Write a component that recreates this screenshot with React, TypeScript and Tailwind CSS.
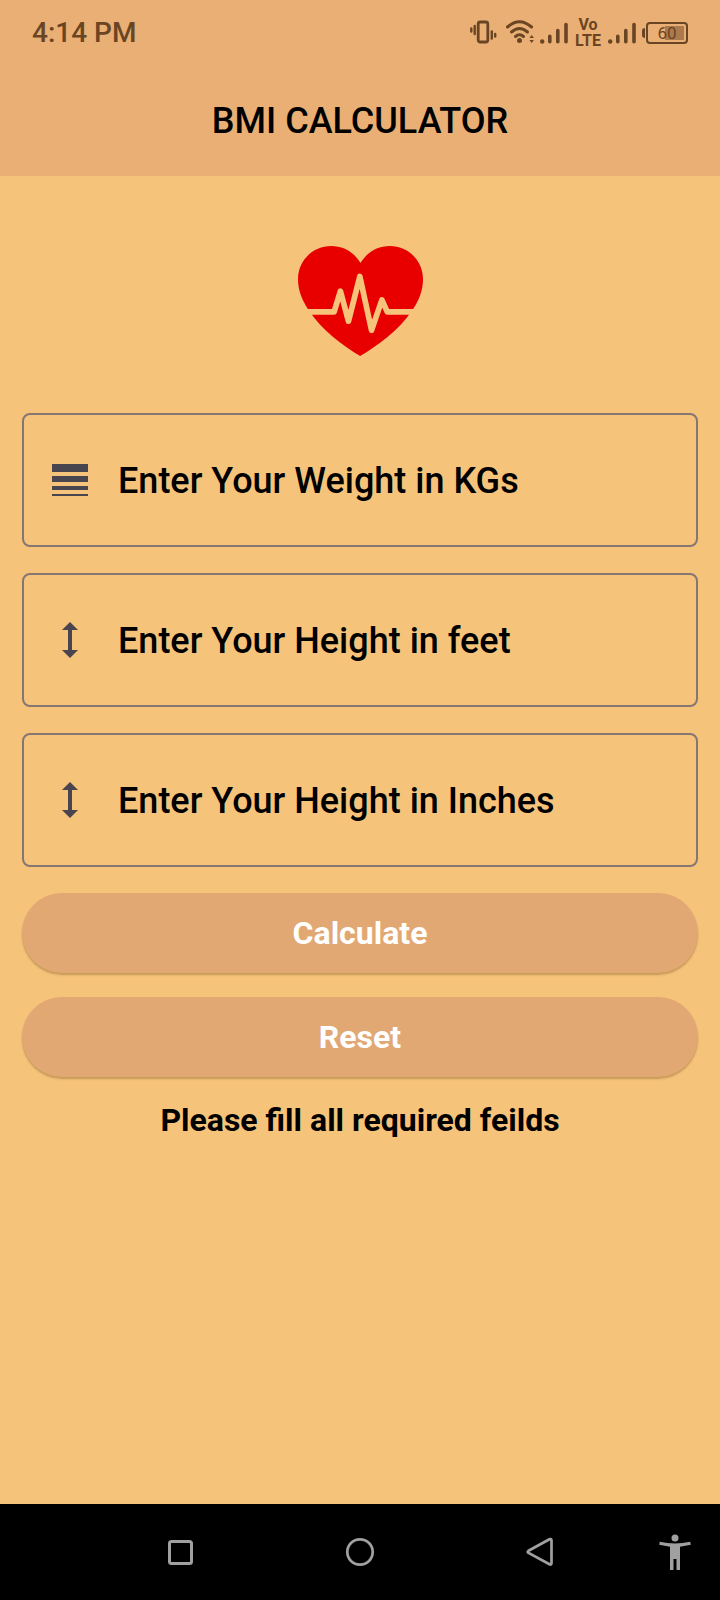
import { useState } from "react";
import type { FormEvent, ReactNode } from "react";

function VibrateIcon() {
  return (
    <svg className="h-[26px] w-[30px]" viewBox="0 0 30 26" fill="none" stroke="currentColor" strokeWidth="2.8" strokeLinecap="round" aria-hidden="true">
      <rect x="8.200" y="2" width="9.600" height="20" rx="2" />
      <path d="M4.700 6v8M1.300 8.500v3M21.800 11.500v7M25.200 14v2.500" strokeWidth="2.400" />
    </svg>
  );
}

function WifiIcon() {
  return (
    <svg className="h-[26px] w-7" viewBox="0 0 28 26" fill="none" stroke="currentColor" strokeWidth="3" strokeLinecap="round" aria-hidden="true">
      <path d="M1.500 7Q13.500 -3.500 25.500 7" />
      <path d="M5.500 12Q13.500 5 21.500 12" />
      <path d="M9.500 16.500Q13.500 13 17.500 16.500" />
      <circle cx="13.500" cy="20.500" r="2.500" fill="currentColor" stroke="none" />
      <path d="M23.500 18l2.200-3 2.200 3zM23.500 20l2.200 3 2.200-3z" fill="currentColor" stroke="none" />
    </svg>
  );
}

function SignalIcon() {
  return (
    <svg className="h-[26px] w-7" viewBox="0 0 28 26" fill="none" stroke="currentColor" strokeWidth="3.6" strokeLinecap="round" aria-hidden="true">
      <circle cx="2.200" cy="21.500" r="2.200" fill="currentColor" stroke="none" />
      <path d="M9.800 21.700v-5.500M17.800 21.700V10.500M26 21.700V4.500" />
    </svg>
  );
}

function Battery({ level }: { level: number }) {
  return (
    <div className="flex items-center gap-px" aria-label={`Battery ${level}%`}>
      <span className="h-[10px] w-[3px] rounded-l-sm bg-current" />
      <span className="relative flex h-[22px] w-[42px] items-center justify-center rounded-[4px] border-2 border-current p-[2px]">
        <span className="ml-auto h-full w-[19px] bg-[#ac7b4d]" />
        <span className="absolute inset-0 text-center text-[17px] leading-[18px]">{level}</span>
      </span>
    </div>
  );
}

function StatusBar() {
  return (
    <div className="flex h-[66px] items-center justify-between px-8 text-[#6a4523]">
      <span className="text-[28px] leading-8 font-medium">4:14 PM</span>
      <div className="flex items-center gap-[6px]">
        <VibrateIcon />
        <WifiIcon />
        <SignalIcon />
        <span className="flex w-7 flex-col items-center text-[16px] leading-4 font-bold">
          <span>Vo</span>
          <span>LTE</span>
        </span>
        <SignalIcon />
        <Battery level={60} />
      </div>
    </div>
  );
}

function HeartPulse() {
  return (
    <svg className="h-[110px] w-[125px]" viewBox="53 47 374 329" aria-hidden="true">
      <path
        fill="#e80000"
        d="M239 376C187 345 125 300 83 236C64 207 53 179 53 146C53 90 98 47 152 47C190 47 221 66 240 98C259 66 290 47 328 47C382 47 427 90 427 146C427 179 416 207 397 236C355 300 291 345 239 376Z"
      />
      <path
        fill="none"
        stroke="#f6c37a"
        strokeWidth="17"
        strokeLinecap="round"
        strokeLinejoin="round"
        d="M60 244H161L180 182L204 272L238 138L273 299L304 208L320 244H420"
      />
    </svg>
  );
}

function LineWeightIcon() {
  return (
    <svg className="size-12 shrink-0" viewBox="0 0 24 24" fill="currentColor" aria-hidden="true">
      <path d="M3 17h18v-2H3v2zm0 3h18v-1H3v1zm0-7h18v-3H3v3zm0-9v4h18V4H3z" />
    </svg>
  );
}

function HeightIcon() {
  return (
    <svg className="size-12 shrink-0" viewBox="0 0 24 24" fill="currentColor" aria-hidden="true">
      <path d="M13 6.990h3L12 3 8 6.990h3v10.020H8L12 21l4-3.990h-3z" />
    </svg>
  );
}

type FieldProps = {
  label: string;
  icon: ReactNode;
  value: string;
  onChange: (value: string) => void;
};

function Field({ label, icon, value, onChange }: FieldProps) {
  return (
    <label className="flex h-[134px] items-center gap-6 rounded-lg border-2 border-[#857573] px-[22px] text-[#49454f]">
      {icon}
      <input
        type="text"
        inputMode="decimal"
        aria-label={label}
        placeholder={label}
        value={value}
        onChange={(event) => onChange(event.target.value)}
        className="min-w-0 flex-1 bg-transparent pt-0.5 text-[36px] leading-[48px] font-medium text-black outline-none placeholder:text-black placeholder:opacity-100"
      />
    </label>
  );
}

const buttonClass =
  "h-20 w-full rounded-full bg-[#e2a873] text-[32px] leading-10 font-bold text-white shadow-[0_2px_2px_rgba(110,80,20,0.35)]";

function NavigationBar() {
  return (
    <nav className="grid h-24 grid-cols-8 items-center bg-black text-[#a0a0a0]">
      <button type="button" aria-label="Recent apps" className="col-span-2 col-start-2 flex justify-center">
        <svg className="size-8" viewBox="0 0 32 32" fill="none" stroke="currentColor" strokeWidth="3">
          <rect x="5.500" y="5.500" width="22" height="22" rx="2" />
        </svg>
      </button>
      <button type="button" aria-label="Home" className="col-span-2 flex justify-center">
        <svg className="size-8" viewBox="0 0 32 32" fill="none" stroke="currentColor" strokeWidth="2.700">
          <circle cx="16" cy="16" r="12.700" />
        </svg>
      </button>
      <button type="button" aria-label="Back" className="col-span-2 flex justify-center">
        <svg className="size-8" viewBox="0 0 32 32" fill="none" stroke="currentColor" strokeWidth="2.700" strokeLinejoin="round">
          <path d="M4.500 14.800L25.500 3.200Q27.500 2.400 27.500 4.500V27Q27.500 29.300 25.500 28.300L4.500 16.900Q3 15.900 4.500 14.800Z" />
        </svg>
      </button>
      <button type="button" aria-label="Accessibility" className="flex justify-center">
        <svg className="h-9 w-8" viewBox="0 0 32 36" fill="currentColor">
          <circle cx="16" cy="4" r="3.500" />
          <path d="M.8 7.800Q16 11.300 31.200 7.800L31.800 10.800L21 12.800V36H17.500V25H14.500V36H11V12.800L.2 10.800Z" />
        </svg>
      </button>
    </nav>
  );
}

export default function App() {
  const [weight, setWeight] = useState("");
  const [feet, setFeet] = useState("");
  const [inches, setInches] = useState("");
  const [message, setMessage] = useState("Please fill all required feilds");

  const calculate = (event: FormEvent) => {
    event.preventDefault();
    const meters = (Number(feet) * 12 + Number(inches)) * 0.0254;
    if (!weight || !feet || !inches || !(meters > 0)) {
      setMessage("Please fill all required feilds");
      return;
    }
    setMessage(`Your BMI is ${(Number(weight) / (meters * meters)).toFixed(2)}`);
  };

  const reset = () => {
    setWeight("");
    setFeet("");
    setInches("");
    setMessage("");
  };

  return (
    <div className="flex min-h-screen flex-col bg-[#f6c37a] font-['Roboto',sans-serif]">
      <header className="bg-[#e9af74]">
        <StatusBar />
        <h1 className="flex h-[110px] items-center justify-center text-[36px] leading-[48px] font-medium text-black">
          BMI CALCULATOR
        </h1>
      </header>
      <main className="flex flex-1 flex-col items-center px-[22px] pt-[70px]">
        <HeartPulse />
        <form onSubmit={calculate} className="mt-[57px] flex w-full flex-col gap-[26px]">
          <Field label="Enter Your Weight in KGs" icon={<LineWeightIcon />} value={weight} onChange={setWeight} />
          <Field label="Enter Your Height in feet" icon={<HeightIcon />} value={feet} onChange={setFeet} />
          <Field label="Enter Your Height in Inches" icon={<HeightIcon />} value={inches} onChange={setInches} />
          <div className="flex flex-col gap-6">
            <button type="submit" className={buttonClass}>
              Calculate
            </button>
            <button type="button" onClick={reset} className={buttonClass}>
              Reset
            </button>
          </div>
        </form>
        <p role="status" className="mt-6 text-center text-[32px] leading-[38px] font-bold text-black">
          {message}
        </p>
      </main>
      <NavigationBar />
    </div>
  );
}
